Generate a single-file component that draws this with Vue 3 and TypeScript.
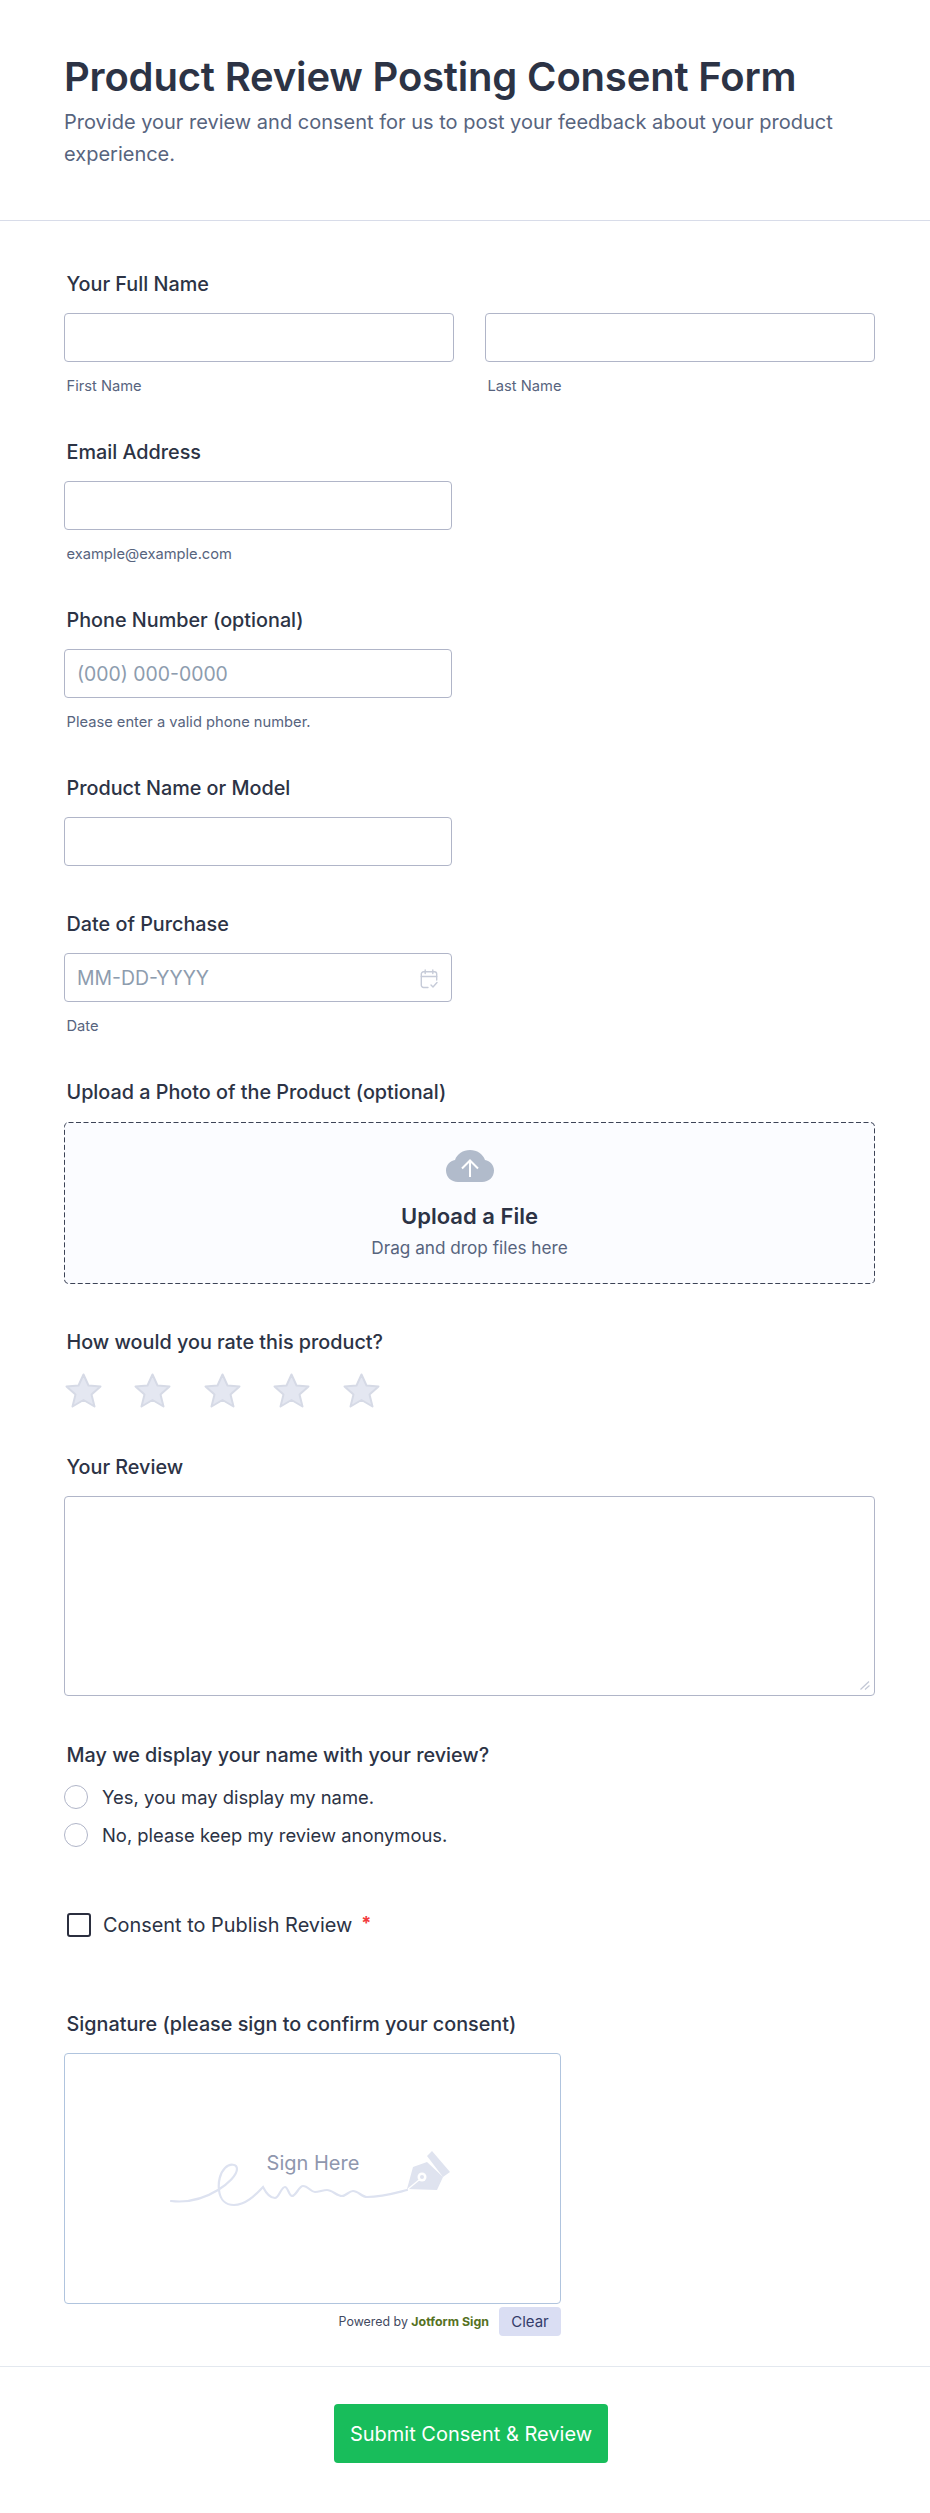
<template>
  <main class="form">
    <header class="form-header">
      <h1 class="title">Product Review Posting Consent Form</h1>
      <p class="subtitle">Provide your review and consent for us to post your feedback about your product experience.</p>
    </header>

    <section class="form-body">
      <div class="field">
        <label class="label">Your Full Name</label>
        <div class="name-row">
          <div class="name-col">
            <input class="input" type="text" />
            <span class="sublabel">First Name</span>
          </div>
          <div class="name-col">
            <input class="input" type="text" />
            <span class="sublabel">Last Name</span>
          </div>
        </div>
      </div>

      <div class="field">
        <label class="label">Email Address</label>
        <input class="input input--single" type="email" />
        <span class="sublabel">example@example.com</span>
      </div>

      <div class="field">
        <label class="label">Phone Number (optional)</label>
        <input class="input input--single" type="tel" placeholder="(000) 000-0000" />
        <span class="sublabel">Please enter a valid phone number.</span>
      </div>

      <div class="field">
        <label class="label">Product Name or Model</label>
        <input class="input input--single" type="text" />
      </div>

      <div class="field">
        <label class="label">Date of Purchase</label>
        <div class="date-wrap">
          <input class="input" type="text" placeholder="MM-DD-YYYY" />
          <svg class="date-icon" width="18" height="20" viewBox="0 0 18 20" fill="none" stroke="#c6cbd8" stroke-width="1.4" stroke-linecap="round" stroke-linejoin="round">
            <path d="M8 18.5H3.5A2.2 2.2 0 0 1 1.3 16.3V5A2.2 2.2 0 0 1 3.5 2.8H14.5A2.2 2.2 0 0 1 16.7 5V11" />
            <path d="M1.3 7.5H16.7M5.2 1V4.5M12.8 1V4.5" />
            <path d="M11 16L13 18L17 13.5" />
          </svg>
        </div>
        <span class="sublabel">Date</span>
      </div>

      <div class="field">
        <label class="label label--upload">Upload a Photo of the Product (optional)</label>
        <div class="upload">
          <svg class="upload-dash" width="811" height="162" viewBox="0 0 811 162">
            <rect x="0.5" y="0.5" width="810" height="161" rx="4" fill="none" stroke="#3c4356" stroke-dasharray="5 2.5" />
          </svg>
          <svg width="48" height="32" viewBox="0 0 48 32">
            <path fill="#b1bbcb" d="M12 32C5 32 0 27 0 20.5C0 15 4 11 9 10C11 4 17 0 24 0C31 0 37 4 39 10C44 11 48 15 48 20.5C48 27 43 32 36 32Z" />
            <path fill="none" stroke="#fff" stroke-width="2" d="M24 27V10.5M16 18.5L24 10.5L32 18.5" />
          </svg>
          <strong class="upload-title">Upload a File</strong>
          <span class="upload-hint">Drag and drop files here</span>
        </div>
      </div>

      <div class="field">
        <label class="label label--rating">How would you rate this product?</label>
        <div class="stars">
          <svg v-for="star in stars" :key="star" width="37" height="35" viewBox="0 0 37 35">
            <path fill="#e4e7f1" stroke="#d6dae6" stroke-width="2" stroke-linejoin="round" d="M18.5 1.5L23.5 12.5L35.5 13.5L26.5 21.5L29.5 33.5L18.5 27L7.5 33.5L10.5 21.5L1.5 13.5L13.5 12.5Z" />
          </svg>
        </div>
      </div>

      <div class="field field--review">
        <label class="label">Your Review</label>
        <div class="review-wrap">
          <textarea class="input textarea"></textarea>
          <svg class="resize-grip" width="10" height="9" viewBox="0 0 10 9" stroke="#c3c8d6" stroke-width="1.2">
            <path d="M0.5 8.5L9 0.5M5 8.5L9.5 4.5" />
          </svg>
        </div>
      </div>

      <div class="field field--radios">
        <label class="label label--radios">May we display your name with your review?</label>
        <div class="radio-list">
          <div v-for="option in displayOptions" :key="option" class="radio-row">
            <span class="radio"></span>
            <span class="radio-text">{{ option }}</span>
          </div>
        </div>
      </div>

      <div class="consent">
        <span class="checkbox"></span>
        <span class="consent-text">Consent to Publish Review</span>
        <span class="required">*</span>
      </div>

      <div class="field field--signature">
        <label class="label">Signature (please sign to confirm your consent)</label>
        <div class="sign-pad">
          <svg class="sign-art" width="330" height="110" viewBox="0 0 330 110">
            <path fill="none" stroke="#dde2f0" stroke-width="2.2" stroke-linecap="round" d="M21 81C38 83 55 78 68 70C78 64 87 55 87 49C87 44 80 43 75 48C70 53 68 62 69 70C70 80 76 85 84 85C97 85 107 73 113 67C116 73 120 78 125 78C129 78 131 67 135 67C138 67 139 76 142 76C146 76 149 66 153 66C158 66 161 72 165 72C169 72 173 70 177 70C182 70 187 76 192 76C196 76 199 71 203 71C208 71 212 77 217 77C232 77 245 73 257 70" />
            <path fill="#dfe3ef" d="M257 69L263 47L277 42L293 57L287 70ZM282 31L300 52L293 57L277 36Z" />
            <path stroke="#fff" stroke-width="1.2" d="M258 69L269 60" />
            <circle cx="272" cy="57" r="4.5" fill="#fff" />
            <circle cx="272" cy="57" r="2" fill="#dfe3ef" />
            <text class="sign-text" x="163" y="50" text-anchor="middle">Sign Here</text>
          </svg>
        </div>
        <div class="sign-footer">
          <span class="powered">Powered by <b class="brand">Jotform Sign</b></span>
          <button class="clear" type="button">Clear</button>
        </div>
      </div>
    </section>

    <footer class="form-footer">
      <button class="submit" type="button">Submit Consent &amp; Review</button>
    </footer>
  </main>
</template>

<script setup lang="ts">
const stars: number[] = [1, 2, 3, 4, 5];

const displayOptions: string[] = [
  'Yes, you may display my name.',
  'No, please keep my review anonymous.',
];
</script>

<style scoped>
.form {
  width: 930px;
  height: 2513px;
  background: #fff;
  font-family: Inter, "Noto Sans", sans-serif;
  color: #2c3345;
  box-sizing: border-box;
}

.form-header {
  padding: 53px 55px 50px 64px;
  border-bottom: 1px solid #d8dce9;
}

.title {
  margin: 0;
  font-size: 40px;
  line-height: 48px;
  font-weight: 600;
  letter-spacing: -0.18px;
  color: #2c3345;
}

.subtitle {
  margin: 5px 0 0;
  font-size: 20px;
  line-height: 32px;
  color: #57647e;
}

.form-body {
  display: flex;
  flex-direction: column;
  gap: 46px;
  padding: 51px 55px 0 64px;
}

.field {
  display: flex;
  flex-direction: column;
  align-items: stretch;
}

.label {
  display: block;
  padding-left: 2.5px;
  margin-bottom: 17px;
  font-size: 19.8px;
  line-height: 24px;
  font-weight: 450;
  color: #2c3345;
}

.label--upload {
  margin-bottom: 18px;
}

.label--rating {
  margin-bottom: 19px;
}

.label--radios {
  margin-bottom: 18px;
}

.name-row {
  display: flex;
  gap: 31px;
}

.name-col {
  display: flex;
  flex-direction: column;
  width: 390px;
}

.input {
  display: block;
  width: 100%;
  height: 49px;
  box-sizing: border-box;
  padding: 0 12px;
  border: 1px solid #b0b5c8;
  border-radius: 4px;
  background: #fff;
  font-family: inherit;
  font-size: 19.4px;
  color: #2c3345;
  outline: none;
}

.input::placeholder {
  color: #8d9cae;
  opacity: 1;
}

.input--single {
  width: 388px;
}

.sublabel {
  display: block;
  margin-top: 16px;
  padding-left: 2.5px;
  font-size: 14.7px;
  line-height: 16px;
  color: #57647e;
}

.date-wrap {
  position: relative;
  width: 388px;
}

.date-icon {
  position: absolute;
  top: 16px;
  right: 14px;
}

.upload {
  position: relative;
  display: flex;
  flex-direction: column;
  align-items: center;
  height: 162px;
  box-sizing: border-box;
  padding-top: 28px;
  border-radius: 4px;
  background: #fbfcff;
}

.upload-dash {
  position: absolute;
  top: 0;
  left: 0;
}

.upload-title {
  margin-top: 20px;
  font-size: 22px;
  line-height: 28px;
  font-weight: 600;
}

.upload-hint {
  margin-top: 6px;
  font-size: 17.2px;
  line-height: 24px;
  color: #57647e;
}

.stars {
  display: flex;
  gap: 32.4px;
  margin-left: 1px;
}

.field--review {
  margin-top: 1px;
}

.review-wrap {
  position: relative;
}

.textarea {
  height: 200px;
  padding: 8px 12px;
  resize: none;
}

.resize-grip {
  position: absolute;
  right: 5px;
  bottom: 6px;
}

.field--radios {
  margin-top: 1px;
}

.radio-list {
  display: flex;
  flex-direction: column;
  gap: 14px;
}

.radio-row {
  display: flex;
  align-items: center;
  gap: 14px;
}

.radio {
  width: 24px;
  height: 24px;
  box-sizing: border-box;
  border: 1px solid #b0b5c8;
  border-radius: 50%;
  background: #fff;
}

.radio-text {
  font-size: 18.4px;
  line-height: 24px;
  color: #2c3345;
}

.consent {
  display: flex;
  align-items: center;
  margin-top: 20px;
  padding-left: 3px;
  height: 24px;
}

.checkbox {
  width: 24px;
  height: 24px;
  box-sizing: border-box;
  border: 2px solid #2b2f3f;
  border-radius: 3px;
}

.consent-text {
  margin-left: 12px;
  font-size: 19.9px;
  line-height: 24px;
  color: #2c3345;
}

.required {
  margin-left: 9px;
  margin-bottom: 6px;
  font-size: 18px;
  font-weight: 700;
  color: #f23a3c;
}

.field--signature {
  margin-top: 29px;
}

.sign-pad {
  display: flex;
  align-items: center;
  justify-content: center;
  width: 497px;
  height: 251px;
  box-sizing: border-box;
  border: 1px solid #b0c4de;
  border-radius: 4px;
  background: #fff;
}

.sign-art {
  flex: none;
  margin-left: 5px;
  margin-bottom: 7px;
}

.sign-text {
  font-size: 20px;
  fill: #8f97ae;
  font-family: Inter, sans-serif;
}

.sign-footer {
  display: flex;
  align-items: center;
  justify-content: flex-end;
  gap: 10px;
  width: 497px;
  margin-top: 3px;
}

.powered {
  font-size: 12.4px;
  color: #434a60;
}

.brand {
  font-weight: 700;
  color: #56721f;
}

.clear {
  width: 62px;
  height: 29px;
  padding: 0;
  border: 0;
  border-radius: 4px;
  background: #dadef3;
  font-family: inherit;
  font-size: 15px;
  color: #343c6a;
}

.form-footer {
  display: flex;
  justify-content: center;
  margin-top: 30px;
  padding-top: 37px;
  border-top: 1px solid #e3e8ef;
}

.submit {
  width: 274px;
  height: 59px;
  margin-left: 12px;
  border: 0;
  border-radius: 4px;
  background: #18bd5b;
  font-family: inherit;
  font-size: 20px;
  font-weight: 400;
  color: #fff;
}
</style>

<style>
html,
body {
  margin: 0;
  background: #fff;
}
</style>
